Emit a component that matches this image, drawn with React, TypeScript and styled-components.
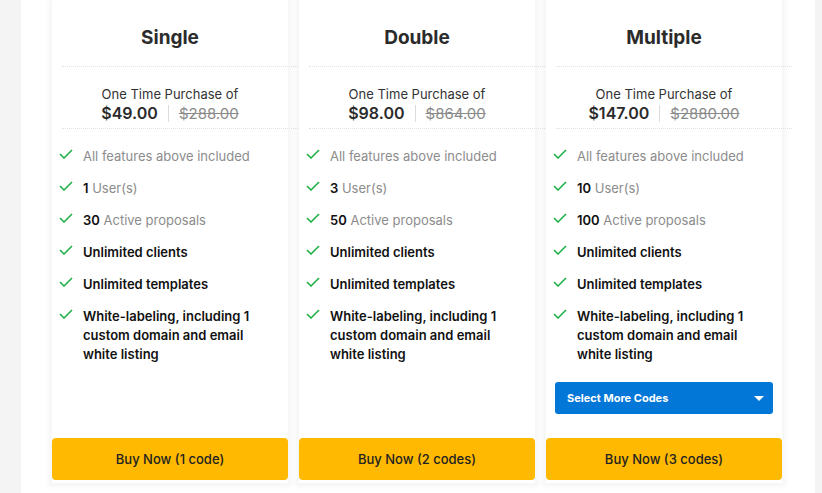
import * as React from 'react';
import styled, { createGlobalStyle } from 'styled-components';

const GlobalStyle = createGlobalStyle`
  body {
    margin: 0;
    background: #f4f4f4;
    font-family: Inter, "Liberation Sans", Arial, sans-serif;
  }
`;

const Page = styled.div`
  margin-left: 21px;
  width: 794px;
  height: 493px;
  box-sizing: border-box;
  background: #fff;
  padding: 0 34px 0 31px;
  display: grid;
  grid-template-columns: repeat(3, 236px);
  column-gap: 11px;
  align-items: start;
`;

const Card = styled.div`
  height: 483px;
  background: #fff;
  box-shadow: 0 0 4px 4px rgba(0, 0, 0, 0.035);
  display: flex;
  flex-direction: column;
`;

const Title = styled.h2`
  margin: 0;
  padding-top: 26px;
  height: 40px;
  font-size: 19px;
  line-height: 24px;
  font-weight: 700;
  color: #2b2b2b;
  text-align: center;
`;

const Divider = styled.div`
  margin-left: 10px;
  width: 100%;
  border-top: 1px dotted #e2e2e2;
`;

const PriceBlock = styled.div`
  padding: 18px 0 5px;
  text-align: center;
  color: #333;
`;

const Caption = styled.div`
  font-size: 13px;
  line-height: 19px;
`;

const PriceRow = styled.div`
  display: flex;
  justify-content: center;
  align-items: center;
  line-height: 19px;
`;

const Price = styled.span`
  font-size: 16px;
  font-weight: 600;
  color: #2b2b2b;
`;

const Sep = styled.span`
  width: 1px;
  height: 17px;
  background: #dcdcdc;
  margin: 0 10px;
`;

const OldPrice = styled.span`
  font-size: 15px;
  color: #8a8a8a;
  text-decoration: line-through;
`;

const Features = styled.ul`
  list-style: none;
  margin: 0;
  padding: 18px 8px 0 7px;
`;

const Feature = styled.li`
  display: flex;
  align-items: flex-start;
  font-size: 13px;
  line-height: 19px;
  margin-bottom: 13px;
  color: #111;
`;

const Check = styled.svg`
  flex: none;
  width: 14px;
  height: 10px;
  margin: 2px 10px 0 0;
`;

const Muted = styled.span`
  color: #8c8c8c;
`;

const Strong = styled.strong`
  font-weight: 600;
`;

const Select = styled.div`
  margin: 5px 9px 0;
  height: 32px;
  background: #0277d8;
  border-radius: 3px;
  display: flex;
  align-items: center;
  justify-content: space-between;
  padding: 0 9px 0 12px;
  color: #fff;
  font-size: 11px;
  font-weight: 700;
`;

const Caret = styled.span`
  width: 0;
  height: 0;
  border-left: 5px solid transparent;
  border-right: 5px solid transparent;
  border-top: 5px solid #fff;
`;

const BuyButton = styled.button`
  margin-top: auto;
  margin-bottom: 3px;
  height: 42px;
  border: none;
  border-radius: 4px;
  background: #ffb900;
  color: #222;
  font-family: inherit;
  font-size: 13px;
  font-weight: 500;
  cursor: pointer;
`;

const CheckIcon = () => (
  <Check viewBox="0 0 14 10">
    <path d="M1 5 L5 9 L13 1" fill="none" stroke="#1fb14a" strokeWidth="1.6" />
  </Check>
);

type Plan = {
  name: string;
  price: string;
  old: string;
  users: string;
  proposals: string;
  codes: string;
  select?: boolean;
};

const plans: Plan[] = [
  { name: 'Single', price: '$49.00', old: '$288.00', users: '1', proposals: '30', codes: '1 code' },
  { name: 'Double', price: '$98.00', old: '$864.00', users: '3', proposals: '50', codes: '2 codes' },
  { name: 'Multiple', price: '$147.00', old: '$2880.00', users: '10', proposals: '100', codes: '3 codes', select: true },
];

const PlanCard = ({ plan }: { plan: Plan }) => (
  <Card>
    <Title>{plan.name}</Title>
    <Divider />
    <PriceBlock>
      <Caption>One Time Purchase of</Caption>
      <PriceRow>
        <Price>{plan.price}</Price>
        <Sep />
        <OldPrice>{plan.old}</OldPrice>
      </PriceRow>
    </PriceBlock>
    <Divider />
    <Features>
      <Feature>
        <CheckIcon />
        <Muted>All features above included</Muted>
      </Feature>
      <Feature>
        <CheckIcon />
        <span>
          <Strong>{plan.users}</Strong> <Muted>User(s)</Muted>
        </span>
      </Feature>
      <Feature>
        <CheckIcon />
        <span>
          <Strong>{plan.proposals}</Strong> <Muted>Active proposals</Muted>
        </span>
      </Feature>
      <Feature>
        <CheckIcon />
        <Strong>Unlimited clients</Strong>
      </Feature>
      <Feature>
        <CheckIcon />
        <Strong>Unlimited templates</Strong>
      </Feature>
      <Feature>
        <CheckIcon />
        <Strong>White-labeling, including 1 custom domain and email white listing</Strong>
      </Feature>
    </Features>
    {plan.select && (
      <Select>
        <span>Select More Codes</span>
        <Caret />
      </Select>
    )}
    <BuyButton>Buy Now ({plan.codes})</BuyButton>
  </Card>
);

export default function App() {
  return (
    <>
      <GlobalStyle />
      <Page>
        {plans.map(p => (
          <PlanCard key={p.name} plan={p} />
        ))}
      </Page>
    </>
  );
}
